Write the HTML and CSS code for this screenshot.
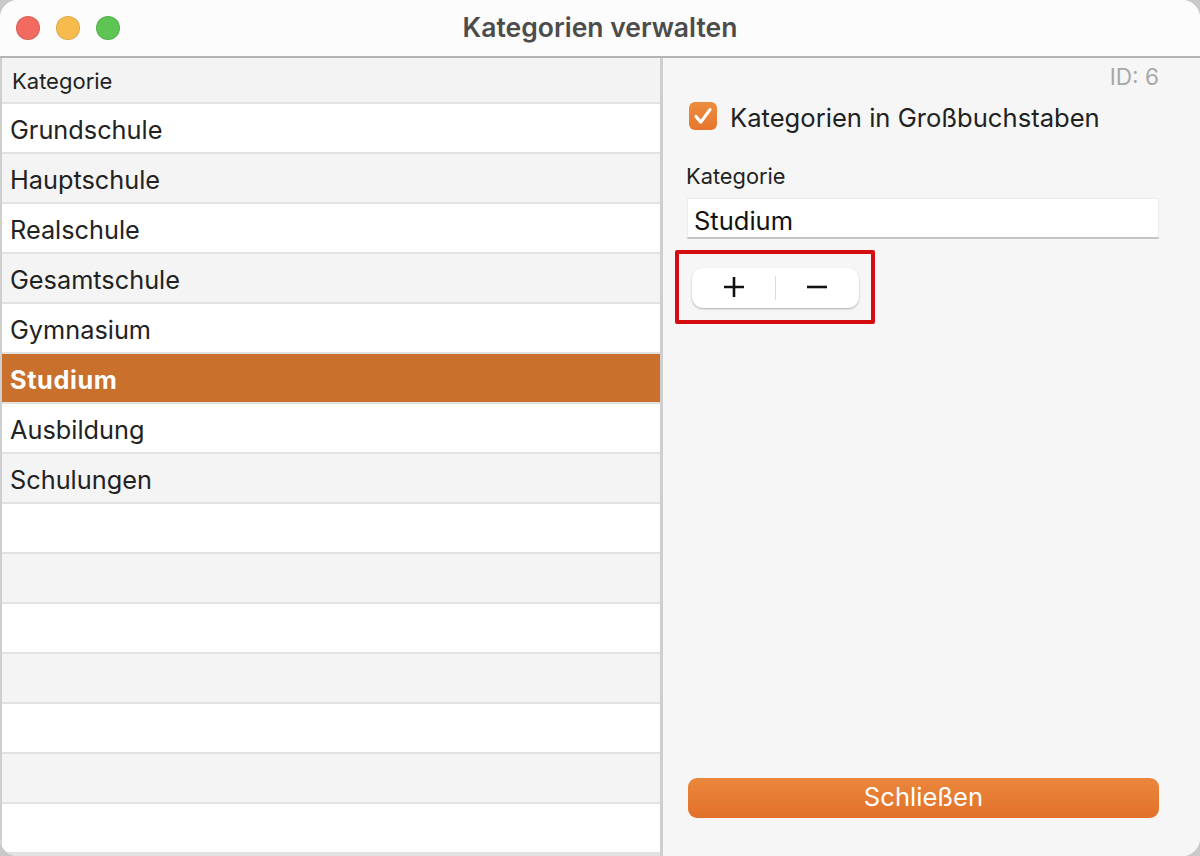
FILE: index.html
```html
<!DOCTYPE html>
<html lang="de">
<head>
<meta charset="utf-8">
<title>Kategorien verwalten</title>
<link rel="stylesheet" href="styles.css">
</head>
<body>
<div class="window">
  <header class="titlebar">
    <div class="lights">
      <span class="light red"></span>
      <span class="light yellow"></span>
      <span class="light green"></span>
    </div>
    <h1 class="title">Kategorien verwalten</h1>
  </header>
  <main class="content">
    <section class="list">
      <div class="list-head">Kategorie</div>
      <div class="row">Grundschule</div>
      <div class="row alt">Hauptschule</div>
      <div class="row">Realschule</div>
      <div class="row alt">Gesamtschule</div>
      <div class="row">Gymnasium</div>
      <div class="row selected">Studium</div>
      <div class="row">Ausbildung</div>
      <div class="row alt">Schulungen</div>
      <div class="row"></div>
      <div class="row alt"></div>
      <div class="row"></div>
      <div class="row alt"></div>
      <div class="row"></div>
      <div class="row alt"></div>
      <div class="row"></div>
    </section>
    <section class="panel">
      <div class="record-id">ID: 6</div>
      <label class="check">
        <span class="checkbox">
          <svg width="20" height="20" viewBox="0 0 20 20"><path d="M3 10.5l4.8 5.6L17 3.6" fill="none" stroke="#fff" stroke-width="3.2" stroke-linecap="round" stroke-linejoin="round"/></svg>
        </span>
        <span class="check-label">Kategorien in Großbuchstaben</span>
      </label>
      <div class="field-label">Kategorie</div>
      <div class="field">Studium</div>
      <div class="highlight">
        <div class="stepper">
          <button class="step">
            <svg width="22" height="22" viewBox="0 0 22 22"><path d="M11 0v20M1 10h20" stroke="#111" stroke-width="2.6" fill="none"/></svg>
          </button>
          <span class="divider"></span>
          <button class="step">
            <svg width="22" height="22" viewBox="0 0 22 22"><path d="M0 10h20" stroke="#111" stroke-width="2.6" fill="none"/></svg>
          </button>
        </div>
      </div>
      <button class="close">Schließen</button>
    </section>
  </main>
</div>
</body>
</html>
```
FILE: styles.css
```css
* { box-sizing: border-box; }
html, body { margin: 0; height: 100%; background: #c9c9c9; }
body { font-family: Inter, "Noto Sans", "Liberation Sans", sans-serif; color: #222; overflow: hidden; }
.window {
  width: 1200px; height: 856px; display: flex; flex-direction: column;
  border-radius: 18px; overflow: hidden; background: #f6f6f6;
}
.titlebar {
  height: 58px; flex: none; display: flex; align-items: center; position: relative;
  background: #fcfcfc; border-bottom: 2px solid #b4b4b4;
}
.lights { display: flex; gap: 16px; padding-left: 16px; }
.light { width: 24px; height: 24px; border-radius: 50%; border: 1px solid rgba(0,0,0,.1); }
.red { background: #f26a60; }
.yellow { background: #f6bb4c; }
.green { background: #5ec454; }
.title {
  position: absolute; left: 0; right: 0; top: 13px; margin: 0; text-align: center;
  font-size: 26.5px; line-height: 28px; font-weight: 600; color: #4c4c4c;
}
.content { flex: 1; display: flex; min-height: 0; }
.list {
  width: 663px; flex: none; display: flex; flex-direction: column;
  border-left: 2px solid #cfcfcf; border-right: 3px solid #cfcfcf; background: #e2e2e2;
}
.list-head {
  height: 46px; flex: none; padding: 2px 0 0 10px; display: flex; align-items: center;
  font-size: 22px; background: #f3f3f3; border-bottom: 2px solid #e2e2e2; color: #222;
}
.row {
  height: 50px; flex: none; padding: 3px 0 0 8px; display: flex; align-items: center;
  font-size: 25.3px; background: #fff; border-bottom: 2px solid #e2e2e2; color: #222;
}
.row.alt { background: #f4f4f4; }
.row.selected { background: #c9702d; color: #fff; font-weight: 700; letter-spacing: .6px; }
.panel { flex: 1; display: flex; flex-direction: column; padding: 6px 41px 38px 23px; background: #f6f6f6; }
.record-id { text-align: right; font-size: 22.6px; line-height: 26px; color: #a8a8a8; }
.check { display: flex; align-items: center; gap: 13px; margin: 11px 0 0 3px; height: 32px; }
.checkbox {
  width: 28px; height: 28px; border-radius: 6px; display: flex; align-items: center; justify-content: center;
  margin-bottom: 2px; background: linear-gradient(#ee8d3f, #e6752d);
}
.check-label { font-size: 25.6px; color: #222; white-space: nowrap; }
.field-label { margin-top: 30px; font-size: 21.8px; line-height: 26px; color: #222; }
.field {
  margin: 9px 0 0 1px; height: 41px; padding: 5px 6px 0; display: flex; align-items: center;
  background: #fff; font-size: 25.5px; color: #111; border: 1px solid #ececec; border-bottom: 2px solid #c4c4c4;
}
.highlight {
  width: 200px; height: 74px; margin: 11px 0 0 -11px; padding: 14px 0 0 13px;
  border: 4px solid #d60d10; border-radius: 2px;
}
.stepper {
  width: 167px; height: 40px; display: flex; align-items: center; background: #fff;
  border-radius: 11px; box-shadow: 0 1px 2px rgba(0,0,0,.3);
}
.step { flex: 1; height: 100%; border: 0; padding: 0; background: transparent; display: flex; align-items: center; justify-content: center; }
.divider { width: 1px; height: 24px; background: #dcdcdc; }
.close {
  margin: auto 0 0 2px; height: 40px; padding: 0 0 3px; border: 0; border-radius: 9px; color: #fff;
  font-family: inherit; font-size: 25.6px; background: linear-gradient(#ea873c, #e2702a);
}
```
